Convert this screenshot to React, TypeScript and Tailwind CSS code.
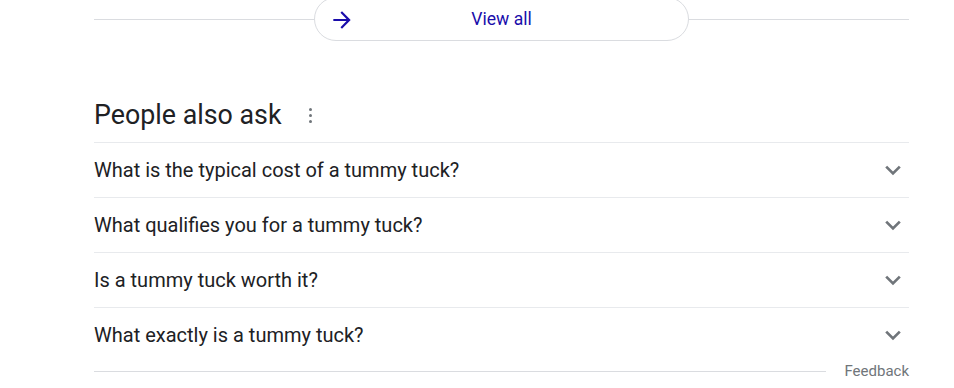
import React from "react";

const questions = [
  "What is the typical cost of a tummy tuck?",
  "What qualifies you for a tummy tuck?",
  "Is a tummy tuck worth it?",
  "What exactly is a tummy tuck?",
];

function Chevron() {
  return (
    <svg width="24" height="24" viewBox="0 0 24 24" className="block">
      <path d="M5.2 8.6 L12 15.4 L18.8 8.6" fill="none" stroke="#70757a" strokeWidth="2.7" />
    </svg>
  );
}

export default function App() {
  return (
    <div className="w-[954px] h-[388px] bg-white overflow-hidden" style={{ fontFamily: "Roboto, Arial, sans-serif" }}>
      <div className="ml-[94px] w-[815px]">
        <div className="flex items-center h-[44px] -mt-[3px]">
          <div className="flex-1 h-px bg-[#dadce0]" />
          <div className="w-[375px] h-[44px] rounded-full border border-[#dadce0] flex items-center relative">
            <svg width="26" height="26" viewBox="0 0 24 24" className="absolute left-[14px] top-[9px]">
              <path d="M12 4l-1.41 1.41L16.17 11H4v2h12.17l-5.58 5.59L12 20l8-8z" fill="#1a0dab" />
            </svg>
            <span className="w-full text-center text-[17.6px] text-[#1a0dab]">View all</span>
          </div>
          <div className="flex-1 h-px bg-[#dadce0]" />
        </div>
        <div className="mt-[53px] h-[42px] mb-[6px] flex items-center">
          <span className="text-[26.8px] text-[#202124] leading-none">People also ask</span>
          <div className="ml-[27px] flex flex-col gap-[3px]">
            <div className="w-[3px] h-[3px] rounded-full bg-[#70757a]" />
            <div className="w-[3px] h-[3px] rounded-full bg-[#70757a]" />
            <div className="w-[3px] h-[3px] rounded-full bg-[#70757a]" />
          </div>
        </div>
        {questions.map((q) => (
          <div key={q} className="border-t border-[#e8eaed] h-[55px] flex items-center justify-between">
            <span className="text-[20px] text-[#202124]">{q}</span>
            <div className="mr-[4px]">
              <Chevron />
            </div>
          </div>
        ))}
        <div className="h-[18px] flex items-center">
          <div className="flex-1 h-px bg-[#dadce0] mt-px" />
          <span className="ml-[18px] text-[15px] text-[#70757a]">Feedback</span>
        </div>
      </div>
    </div>
  );
}
